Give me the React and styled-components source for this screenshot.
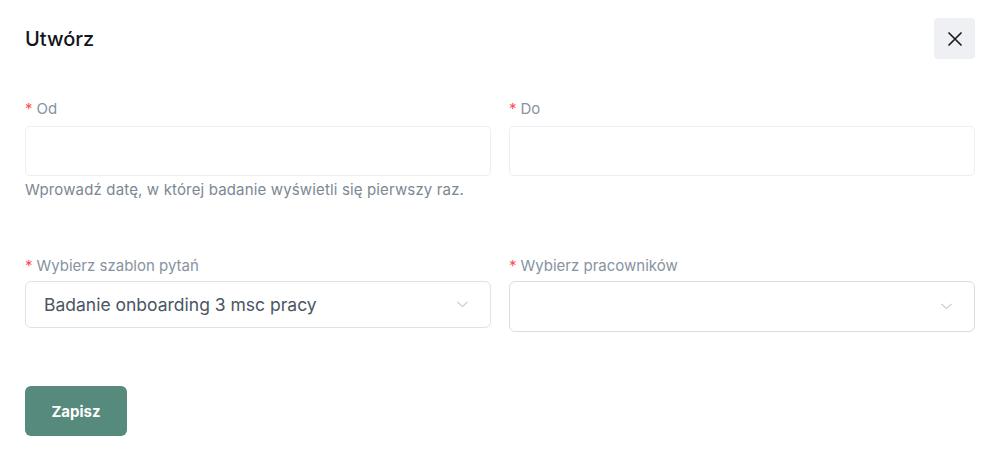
import styled, { createGlobalStyle } from 'styled-components';

const GlobalStyle = createGlobalStyle`
  body {
    margin: 0;
    background: #ffffff;
    font-family: 'Inter', 'Noto Sans', sans-serif;
  }
`;

const Modal = styled.div`
  width: 996px;
  height: 456px;
  box-sizing: border-box;
  padding: 18px 21px 20px 25px;
  background: #ffffff;
`;

const Header = styled.div`
  display: flex;
  align-items: center;
  justify-content: space-between;
  height: 41px;
  margin-bottom: 39px;
`;

const Title = styled.h2`
  margin: 0;
  font-size: 20px;
  font-weight: 500;
  color: #111418;
`;

const CloseButton = styled.button`
  width: 41px;
  height: 41px;
  border: none;
  border-radius: 4px;
  background: #eff0f3;
  display: flex;
  align-items: center;
  justify-content: center;
  padding: 0;
  cursor: pointer;
`;

const Row = styled.div`
  display: grid;
  grid-template-columns: 466px 466px;
  column-gap: 18px;
  align-items: start;
  margin-bottom: ${(p) => p.$gap}px;
`;

const Field = styled.div`
  display: flex;
  flex-direction: column;
`;

const Label = styled.label`
  font-size: 15px;
  line-height: 22px;
  color: #8793a0;
  margin-bottom: ${(p) => p.$gap}px;

  &::before {
    content: '*';
    color: #ff4d4f;
    margin-right: 4px;
  }
`;

const Input = styled.input`
  box-sizing: border-box;
  height: 50px;
  border: 1px solid #eceef1;
  border-radius: 5px;
  padding: 0 18px;
  font: inherit;
  outline: none;
`;

const Help = styled.div`
  margin-top: 3px;
  font-size: 15px;
  letter-spacing: 0.15px;
  line-height: 22px;
  color: #7c8793;
`;

const Select = styled.div`
  box-sizing: border-box;
  height: ${(p) => p.$height}px;
  border: 1px solid ${(p) => p.$border};
  border-radius: 6px;
  padding: 0 22px 0 18px;
  display: flex;
  align-items: center;
  justify-content: space-between;
`;

const Value = styled.span`
  font-size: 17.5px;
  color: #4b5563;
`;

const SaveButton = styled.button`
  width: 102px;
  height: 50px;
  border: none;
  border-radius: 6px;
  background: #568a7c;
  color: #ffffff;
  font-family: 'Inter', sans-serif;
  font-size: 15px;
  font-weight: 700;
  cursor: pointer;
`;

function Chevron() {
  return (
    <svg width="11" height="7" viewBox="0 0 11 7" fill="none">
      <path d="M0.5 0.8 L5.5 5.6 L10.5 0.8" stroke="#c3c8cf" strokeWidth="1.1" />
    </svg>
  );
}

export default function App() {
  return (
    <>
      <GlobalStyle />
      <Modal>
        <Header>
          <Title>Utwórz</Title>
          <CloseButton aria-label="Zamknij">
            <svg width="14" height="14" viewBox="0 0 14 14">
              <path d="M1 1 L13 13 M13 1 L1 13" stroke="#1b1b22" strokeWidth="1.7" strokeLinecap="round" />
            </svg>
          </CloseButton>
        </Header>

        <Row $gap={54}>
          <Field>
            <Label $gap={6}>Od</Label>
            <Input />
            <Help>Wprowadź datę, w której badanie wyświetli się pierwszy raz.</Help>
          </Field>
          <Field>
            <Label $gap={6}>Do</Label>
            <Input />
          </Field>
        </Row>

        <Row $gap={54}>
          <Field>
            <Label $gap={4}>Wybierz szablon pytań</Label>
            <Select $height={47} $border="#dfe2e6">
              <Value>Badanie onboarding 3 msc pracy</Value>
              <Chevron />
            </Select>
          </Field>
          <Field>
            <Label $gap={4}>Wybierz pracowników</Label>
            <Select $height={51} $border="#d9dce1">
              <Value />
              <Chevron />
            </Select>
          </Field>
        </Row>

        <SaveButton>Zapisz</SaveButton>
      </Modal>
    </>
  );
}
